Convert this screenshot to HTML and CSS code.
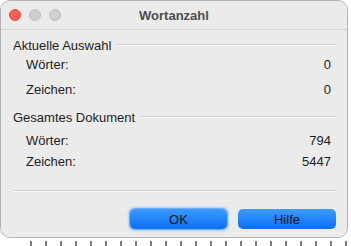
FILE: index.html
```html
<!DOCTYPE html>
<html lang="de">
<head>
<meta charset="utf-8">
<title>Wortanzahl</title>
<link rel="stylesheet" href="styles.css">
</head>
<body>
<div class="win">
    <div class="titlebar">
        <div class="lights">
            <span class="light red"></span>
            <span class="light"></span>
            <span class="light"></span>
        </div>
        <div class="title">Wortanzahl</div>
    </div>
    <div class="content">
        <div class="group">
            <div class="legend"><span>Aktuelle Auswahl</span><i></i></div>
            <div class="row"><span>Wörter:</span><span>0</span></div>
            <div class="row"><span>Zeichen:</span><span>0</span></div>
        </div>
        <div class="group">
            <div class="legend"><span>Gesamtes Dokument</span><i></i></div>
            <div class="row"><span>Wörter:</span><span>794</span></div>
            <div class="row"><span>Zeichen:</span><span>5447</span></div>
        </div>
        <div class="sep"></div>
        <div class="buttons">
            <button class="btn default">OK</button>
            <button class="btn">Hilfe</button>
        </div>
    </div>
</div>
<div class="behind"></div>
</body>
</html>
```

FILE: styles.css
```css
* { margin: 0; padding: 0; box-sizing: border-box; }
body { background: #fff; font-family: "Liberation Sans", Arial, sans-serif; font-size: 13px; color: #1d1d1d; overflow: hidden; }
.win { width: 348px; height: 238px; background: #ececec; border: 1px solid #b4b4b4; border-radius: 10px; position: relative; z-index: 1; overflow: hidden; }
.titlebar { height: 29px; border-bottom: 1px solid #d2d2d2; display: flex; align-items: center; position: relative; background: #ebebeb; }
.lights { display: flex; gap: 8px; padding-left: 8px; }
.light { width: 12px; height: 12px; border-radius: 50%; background: #cfcfcf; border: 1px solid #bdbdbd; }
.light.red { background: #fe5f57; border-color: #e2463f; }
.title { position: absolute; left: 0; right: 0; text-align: center; font-weight: bold; color: #4d4d4d; font-size: 13px; }
.content { padding: 6px 10px 0 12px; background: repeating-linear-gradient(#ededed 0 1px, #e9e9e9 1px 2px); height: 208px; }
.legend { display: flex; align-items: center; gap: 5px; height: 18px; }
.legend i { flex: 1; border-top: 1px solid #d3d3d3; border-bottom: 1px solid #f8f8f8; }
.row { display: flex; justify-content: space-between; padding: 0 6px 0 13px; height: 20px; align-items: center; }
.group:first-child .row + .row { margin-top: 5px; }
.group + .group { margin-top: 9px; }
.group + .group .legend + .row { margin-top: 4px; }
.group + .group .row + .row { margin-top: 1px; }
.sep { border-top: 1px solid #d3d3d3; border-bottom: 1px solid #f8f8f8; margin-top: 19px; }
.buttons { display: flex; justify-content: flex-end; align-items: center; gap: 11px; margin-top: 17px; padding-right: 1px; }
.btn { width: 98px; height: 20px; border: none; border-radius: 5px; background: linear-gradient(#3d9bff, #0a6ff7); color: #111; font-family: inherit; font-size: 13px; }
.btn.default { box-shadow: 0 0 0 1px #6fb0f7, 0 0 2px 2px #a9cdf5; width: 97px; }
.behind { position: absolute; left: 30px; right: 0; top: 241px; height: 5px; background: repeating-linear-gradient(90deg, #444 0 2px, transparent 2px 15px); opacity: .7; }
```
